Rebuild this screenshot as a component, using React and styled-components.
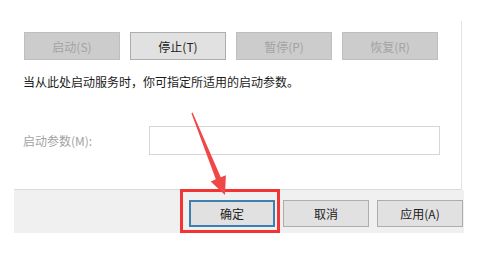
import React from "react";
import styled, { createGlobalStyle } from "styled-components";

const Global = createGlobalStyle`
  html, body {
    margin: 0;
    padding: 0;
    background: #ffffff;
  }
  body {
    font-family: "Noto Sans CJK SC", "Noto Sans", sans-serif;
    font-size: 12px;
  }
`;

const Page = styled.div`
  position: relative;
  width: 494px;
  height: 257px;
  background: #ffffff;
  overflow: hidden;
  padding-top: 21px;
  box-sizing: border-box;
`;

const Dialog = styled.div`
  margin-left: 14px;
  width: 450px;
`;

const Panel = styled.div`
  width: 448px;
  height: 169px;
  box-sizing: border-box;
  border-right: 1px solid #e3e3e3;
  border-bottom: 1px solid #dadada;
  padding: 11px 0 0 10px;
`;

const ButtonRow = styled.div`
  display: flex;
  gap: 10px;
`;

const Button = styled.div`
  width: ${(p) => p.$w || 96}px;
  height: ${(p) => p.$h || 28}px;
  box-sizing: border-box;
  display: flex;
  align-items: center;
  justify-content: center;
  font-size: 12px;
  color: ${(p) => (p.$disabled ? "#a3a3a3" : "#222222")};
  background: ${(p) => (p.$disabled ? "#cccccc" : "#e1e1e1")};
  border: ${(p) =>
    p.$primary
      ? "2px solid #3d7fb3"
      : p.$disabled
      ? "1px solid #bfbfbf"
      : "1px solid #adadad"};
`;

const Hint = styled.p`
  margin: 14px 0 0 -1px;
  line-height: 16px;
  font-size: 12px;
  color: #1a1a1a;
`;

const ParamRow = styled.div`
  display: flex;
  align-items: center;
  margin-top: 36px;
`;

const ParamLabel = styled.span`
  width: 126px;
  margin-left: -1px;
  color: #a3a3a3;
  font-size: 12px;
`;

const ParamInput = styled.div`
  width: 291px;
  height: 29px;
  box-sizing: border-box;
  border: 1px solid #d6d6d6;
  background: #ffffff;
`;

const Footer = styled.div`
  height: 43px;
  background: #f0f0f0;
  display: flex;
  justify-content: flex-end;
  align-items: flex-start;
  gap: 8px;
  padding: 10px 1px 0 0;
  box-sizing: border-box;
`;

const Marked = styled.div`
  position: relative;
`;

const RedFrame = styled.div`
  position: absolute;
  left: -9px;
  top: -11px;
  right: -5px;
  bottom: -6px;
  border: 3px solid #f23434;
  pointer-events: none;
`;

const Arrow = styled.svg`
  position: absolute;
  left: 0;
  top: 0;
  pointer-events: none;
`;

export default function App() {
  return (
    <Page>
      <Global />
      <Dialog>
        <Panel>
          <ButtonRow>
            <Button $disabled>启动(S)</Button>
            <Button>停止(T)</Button>
            <Button $disabled>暂停(P)</Button>
            <Button $disabled>恢复(R)</Button>
          </ButtonRow>
          <Hint>当从此处启动服务时，你可指定所适用的启动参数。</Hint>
          <ParamRow>
            <ParamLabel>启动参数(M):</ParamLabel>
            <ParamInput />
          </ParamRow>
        </Panel>
        <Footer>
          <Marked>
            <Button $primary $w={86} $h={27}>确定</Button>
            <RedFrame />
          </Marked>
          <Button $w={86} $h={27}>取消</Button>
          <Button $w={86} $h={27}>应用(A)</Button>
        </Footer>
      </Dialog>
      <Arrow width="494" height="257" viewBox="0 0 494 257">
        <polygon
          points="192.6,112.6 220.8,177.3 225.9,175.2 225,195 210.7,181.4 215.8,179.3 191.4,113.2"
          fill="#f04848"
        />
      </Arrow>
    </Page>
  );
}
